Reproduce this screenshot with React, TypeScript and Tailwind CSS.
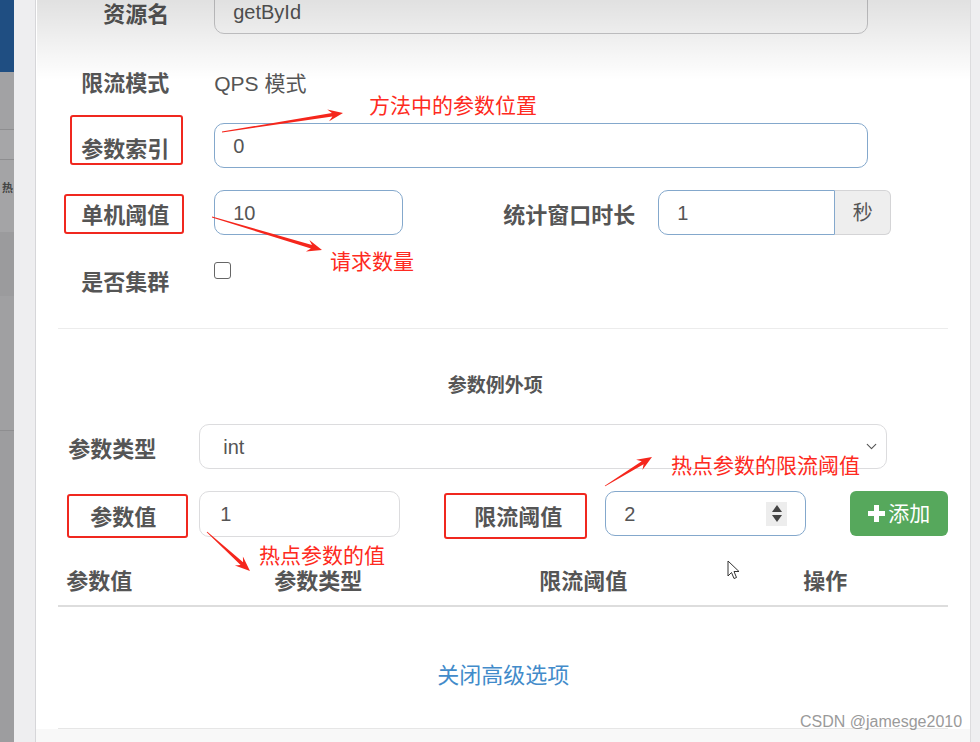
import { ChevronDown } from 'lucide-react';

const label = 'text-[22px] font-bold text-[#555] leading-[28px] text-right';
const inputBase = 'h-[45px] rounded-[10px] border bg-white flex items-center text-[20px] text-[#555]';

// tapered red arrow, tail -> tip
function arrowPoints(tx: number, ty: number, hx: number, hy: number) {
  const dx = hx - tx;
  const dy = hy - ty;
  const len = Math.sqrt(dx * dx + dy * dy);
  const ux = dx / len;
  const uy = dy / len;
  const nx = -uy;
  const ny = ux;
  const bx = hx - ux * 15;
  const by = hy - uy * 15;
  const nbx = hx - ux * 11;
  const nby = hy - uy * 11;
  const p = (x: number, y: number) => `${x.toFixed(1)},${y.toFixed(1)}`;
  return [
    p(tx + nx * 0.4, ty + ny * 0.4),
    p(nbx + nx * 1.8, nby + ny * 1.8),
    p(bx + nx * 6, by + ny * 6),
    p(hx, hy),
    p(bx - nx * 6, by - ny * 6),
    p(nbx - nx * 1.8, nby - ny * 1.8),
    p(tx - nx * 0.4, ty - ny * 0.4),
  ].join(' ');
}

const arrows = [
  [222, 132, 343, 113],
  [212, 217, 322, 250],
  [605, 486, 652, 457],
  [207, 532, 250, 571],
];

const boxes = [
  'left-[70px] top-[115px] w-[113px] h-[50px]',
  'left-[64px] top-[194px] w-[120px] h-[40px]',
  'left-[67px] top-[494px] w-[121px] h-[44px]',
  'left-[444px] top-[493px] w-[143px] h-[46px]',
];

function Sidebar() {
  return (
    <div className="w-[14px] flex flex-col">
      <div className="h-[72px] bg-[#1f4e82]" />
      <div className="h-[58px] bg-[#a2a2a4] border-b border-[#8e8e90]" />
      <div className="h-[30px] bg-[#a6a6a8] border-b border-[#8e8e90]" />
      <div className="h-[72px] bg-[#a4a4a6] pl-[2px] pt-[20px] text-[11px] font-bold text-[#444] leading-[16px]">
        热
      </div>
      <div className="h-[64px] bg-[#9b9b9d]" />
      <div className="h-[135px] bg-[#a0a0a2] border-b border-[#8e8e90]" />
      <div className="flex-1 bg-[#9d9d9f]" />
    </div>
  );
}

export default function App() {
  return (
    <div className="relative w-[980px] h-[742px] overflow-hidden flex bg-white font-['Liberation_Sans','Noto_Sans_CJK_SC',sans-serif]">
      <Sidebar />
      <div className="w-[23px] bg-[#eeeef0] border-r border-[#d6d6d9]" />

      {/* modal */}
      <div className="flex-1 flex flex-col bg-white">
        <div className="px-[22px]">
          <div className="flex flex-col gap-[22px] -mt-[11px]">
            <div className="flex gap-[45px] h-[45px]">
              <div className={`${label} w-[111px] pt-[12px]`}>资源名</div>
              <div className={`${inputBase} w-[654px] border-[#c9c9cb] bg-[#eeeeee] pl-[18px]`}>getById</div>
            </div>
            <div className="flex gap-[45px] h-[45px]">
              <div className={`${label} w-[111px] pt-[14px]`}>限流模式</div>
              <div className="pt-[14px] text-[21px] leading-[28px] text-[#555]">QPS 模式</div>
            </div>
            <div className="flex gap-[45px] h-[45px]">
              <div className={`${label} w-[111px] pt-[13px]`}>参数索引</div>
              <div className={`${inputBase} w-[654px] border-[#84a8cc] pl-[18px]`}>0</div>
            </div>
            <div className="flex h-[45px]">
              <div className={`${label} w-[111px] pt-[12px]`}>单机阈值</div>
              <div className={`${inputBase} ml-[45px] w-[189px] border-[#84a8cc] pl-[18px]`}>10</div>
              <div className={`${label} w-[232px] pt-[12px]`}>统计窗口时长</div>
              <div className="ml-[23px] flex h-[45px]">
                <div className="w-[177px] h-[45px] rounded-l-[10px] border border-[#84a8cc] flex items-center pl-[18px] text-[20px] text-[#555]">
                  1
                </div>
                <div className="w-[56px] h-[45px] rounded-r-[6px] border border-l-0 border-[#d4d4d6] bg-[#eeeeee] flex items-center justify-center text-[20px] text-[#555]">
                  秒
                </div>
              </div>
            </div>
            <div className="flex gap-[45px] h-[45px]">
              <div className={`${label} w-[111px] pt-[12px]`}>是否集群</div>
              <div className="mt-[5px] w-[17px] h-[17px] rounded-[3px] border-[1.5px] border-[#666] bg-white" />
            </div>
          </div>

          <div className="mt-[26px] h-px bg-[#ececec]" />

          <div className="mt-[43px] pr-[16px] text-center text-[19px] font-bold leading-[28px] text-[#555]">参数例外项</div>

          <div className="mt-[24px] flex gap-[43px] h-[45px]">
            <div className={`${label} w-[98px] pt-[12px]`}>参数类型</div>
            <div className={`${inputBase} w-[688px] border-[#dcdcde] pl-[23px] pr-[6px] justify-between`}>
              <span>int</span>
              <ChevronDown size={17} strokeWidth={1.6} className="text-[#555]" />
            </div>
          </div>

          <div className="mt-[22px] flex h-[46px] items-start">
            <div className={`${label} w-[98px] pt-[13px]`}>参数值</div>
            <div className={`${inputBase} ml-[43px] h-[46px] w-[201px] border-[#dcdcde] pl-[20px]`}>1</div>
            <div className={`${label} w-[162px] pt-[13px]`}>限流阈值</div>
            <div className={`${inputBase} ml-[43px] w-[201px] border-[#84a8cc] pl-[18px] pr-[18px] justify-between`}>
              <span>2</span>
              <div className="w-[21px] h-[24px] bg-[#ededed] flex flex-col items-center justify-center gap-[3px]">
                <svg width="10" height="7" viewBox="0 0 10 7"><path d="M5 0L10 7H0Z" fill="#444" /></svg>
                <svg width="10" height="7" viewBox="0 0 10 7"><path d="M0 0H10L5 7Z" fill="#444" /></svg>
              </div>
            </div>
            <button className="ml-[44px] w-[98px] h-[45px] rounded-[6px] bg-[#56a85c] text-white text-[21px] flex items-center justify-center gap-[3px]">
              <svg width="17" height="17" viewBox="0 0 17 17">
                <rect x="6" y="0" width="5" height="17" fill="white" />
                <rect x="0" y="6" width="17" height="5" fill="white" />
              </svg>
              添加
            </button>
          </div>

          <div className="mt-[31px] grid grid-cols-[208px_265px_264px_1fr] border-b-2 border-[#dddddd]">
            {['参数值', '参数类型', '限流阈值', '操作'].map((h) => (
              <div key={h} className="pl-[8px] pb-[9px] text-[22px] font-bold leading-[28px] text-[#555]">
                {h}
              </div>
            ))}
          </div>

          <div className="mt-[54px] text-center text-[22px] leading-[30px] text-[#428bca]">关闭高级选项</div>

          <div className="mt-[37px] h-px bg-[#e6e6e6]" />
        </div>
        <div className="flex-1 bg-[#f8f8f8]" />
      </div>

      <div className="w-[10px] bg-[#eeeef0] border-l border-[#dcdcde]" />

      {/* top shade of the capture */}
      <div className="absolute left-[37px] top-0 w-[933px] h-[80px] bg-linear-to-b from-black/[0.12] to-transparent pointer-events-none" />

      {/* annotations */}
      {boxes.map((b) => (
        <div key={b} className={`absolute ${b} border-[2.5px] border-[#f0281f] rounded-[3px] pointer-events-none`} />
      ))}
      <svg className="absolute left-0 top-0 pointer-events-none" width="980" height="742">
        {arrows.map(([a, b, c, d]) => (
          <polygon key={`${a}-${b}`} points={arrowPoints(a, b, c, d)} fill="#f5261c" />
        ))}
      </svg>
      <div className="absolute left-[369px] top-[92px] text-[21px] leading-[28px] text-[#fe2a21]">方法中的参数位置</div>
      <div className="absolute left-[330px] top-[248px] text-[21px] leading-[28px] text-[#fe2a21]">请求数量</div>
      <div className="absolute left-[671px] top-[452px] text-[21px] leading-[28px] text-[#fe2a21]">热点参数的限流阈值</div>
      <div className="absolute left-[259px] top-[542px] text-[21px] leading-[28px] text-[#fe2a21]">热点参数的值</div>

      {/* mouse cursor */}
      <svg className="absolute left-[727px] top-[560px] pointer-events-none" width="14" height="20" viewBox="0 0 14 20">
        <path d="M1 1V16L4.5 12.5L7 18.5L9.5 17.5L7 11.5H12Z" fill="white" stroke="#333" strokeWidth="1" strokeLinejoin="round" />
      </svg>

      <div className="absolute left-[800px] top-[711px] text-[16px] leading-[22px] text-[#9a9a9a] pointer-events-none">CSDN @jamesge2010</div>
    </div>
  );
}
